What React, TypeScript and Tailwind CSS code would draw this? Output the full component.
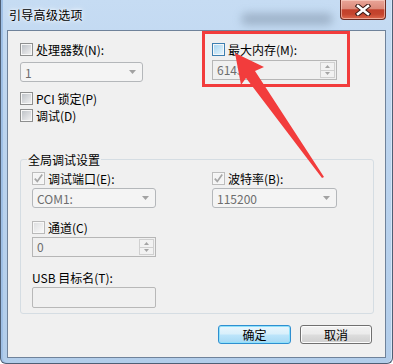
import React from "react";

type BoxKind = "normal" | "hover" | "disabledChecked" | "light";

const boxOuter: Record<BoxKind, string> = {
  normal: "border-[#8e8f8f]",
  hover: "border-[#3c7fb1]",
  disabledChecked: "border-[#bdbdbd]",
  light: "border-[#b9b9b9]",
};

const boxInner: Record<BoxKind, string> = {
  normal: "bg-[linear-gradient(135deg,#bfc3c8,#efeff0)]",
  hover: "bg-[linear-gradient(135deg,#a9d6f2,#e4f4fc)]",
  disabledChecked: "bg-[#f4f4f4]",
  light: "bg-[linear-gradient(135deg,#dfe0e2,#f8f8f8)]",
};

function Box({ kind }: { kind: BoxKind }) {
  return (
    <span
      className={`relative flex h-[13px] w-[13px] shrink-0 items-center justify-center border bg-[#f7f7f7] ${boxOuter[kind]}`}
    >
      <span className={`h-[9px] w-[9px] ${boxInner[kind]}`} />
      {kind === "disabledChecked" && (
        <svg className="absolute inset-0" width="11" height="11" viewBox="0 0 11 11">
          <path d="M1.8 5.6 L4.3 8.4 L9.2 1.6" fill="none" stroke="#a6a6a6" strokeWidth="1.7" />
        </svg>
      )}
    </span>
  );
}

function Check({ label, kind = "normal", className = "" }: { label: string; kind?: BoxKind; className?: string }) {
  return (
    <label className={`flex h-[13px] items-center gap-[3px] text-[12px] leading-[13px] text-black ${className}`}>
      <Box kind={kind} />
      <span className="whitespace-pre">{label}</span>
    </label>
  );
}

function Combo({ value, className = "" }: { value: string; className?: string }) {
  return (
    <div
      className={`flex h-[20px] items-center justify-between rounded-[3px] border border-[#b4b7ba] bg-[#f4f4f4] pl-[4px] pr-[6px] text-[12px] text-[#6d6d6d] ${className}`}
    >
      <span>{value}</span>
      <svg width="7" height="4" viewBox="0 0 7 4">
        <path d="M0 0 H7 L3.5 4 Z" fill="#a2a2a2" />
      </svg>
    </div>
  );
}

function Spin({ value, className = "" }: { value: string; className?: string }) {
  return (
    <div className={`flex h-[20px] border border-[#b6b6b6] bg-[#f0f0f0] text-[12px] text-[#6d6d6d] ${className}`}>
      <span className="flex-1 pl-[4px] leading-[18px]">{value}</span>
      <div className="my-[1px] mr-[1px] flex w-[15px] flex-col border border-[#d0d0d0] bg-[#f2f2f2]">
        <div className="flex flex-1 items-center justify-center border-b border-[#d0d0d0]">
          <svg width="5" height="3" viewBox="0 0 5 3">
            <path d="M0 3 H5 L2.5 0 Z" fill="#a4a4a4" />
          </svg>
        </div>
        <div className="flex flex-1 items-center justify-center">
          <svg width="5" height="3" viewBox="0 0 5 3">
            <path d="M0 0 H5 L2.5 3 Z" fill="#a4a4a4" />
          </svg>
        </div>
      </div>
    </div>
  );
}

export default function App() {
  return (
    <div className="relative flex h-[364px] w-[393px] flex-col overflow-hidden rounded-b-[6px] border-x border-b border-[#4f5f75] bg-[linear-gradient(180deg,#c6dcf3_0%,#bcd4ee_35%,#b2cdea_100%)] font-['Noto_Sans_CJK_SC',sans-serif] shadow-[inset_2px_0_0_#9fc0e6,inset_-1px_0_0_#d6e6f7]">
      {/* blurred window behind the glass */}
      <div className="absolute left-[240px] top-[13px] h-[12px] w-[92px] rounded-full bg-[#8fa3b9] opacity-70 blur-[4px]" />

      {/* title bar */}
      <div className="relative flex h-[30px] shrink-0 items-start justify-between pl-[8px] pr-[6px]">
        <span className="mt-[8px] text-[12px] leading-[14px] tracking-[0.3px] text-black [text-shadow:0_0_6px_#ffffff,0_0_3px_#ffffff]">
          引导高级选项
        </span>
        <div className="flex h-[20px] w-[46px] items-center justify-center rounded-b-[4px] border border-t-0 border-[#6b2b22] bg-[linear-gradient(180deg,#e9a598_0%,#dc8a7a_45%,#c2402b_52%,#c5452e_75%,#de6a4f_100%)] shadow-[inset_0_0_0_1px_rgba(255,220,210,0.55)]">
          <svg width="16" height="12" viewBox="0 0 16 12">
            <path d="M3 2 L13 10 M13 2 L3 10" stroke="#3b1a16" strokeWidth="4.6" strokeLinecap="square" />
            <path d="M3 2 L13 10 M13 2 L3 10" stroke="#ffffff" strokeWidth="2.6" strokeLinecap="square" />
          </svg>
        </div>
      </div>

      {/* client area */}
      <div className="mx-[6px] h-[328px] shrink-0 border border-[#6f829a] bg-[#f0f0f0] text-[12px] leading-[13px] text-black">
        <div className="flex flex-col pl-[12px] pt-[12px]">
          <div className="flex">
            <div className="flex w-[192px] flex-col">
              <Check label="处理器数(N):" />
              <Combo value="1" className="mt-[6px] w-[123px]" />
              <Check label="PCI 锁定(P)" className="mt-[10px]" />
              <Check label="调试(D)" className="mt-[4px]" />
            </div>
            <div className="flex flex-col">
              <Check label="最大内存(M):" kind="hover" />
              <Spin value="6143" className="mt-[4px] w-[125px]" />
            </div>
          </div>

          <div className="relative mt-[37px] h-[155px] w-[354px] rounded-[3px] border border-[#d5dde3] pl-[11px] pt-[12px]">
            <span className="absolute -top-[7px] left-[6px] bg-[#f0f0f0] px-[1px] leading-[13px]">全局调试设置</span>
            <div className="flex">
              <div className="flex w-[180px] flex-col">
                <Check label="调试端口(E):" kind="disabledChecked" />
                <Combo value="COM1:" className="mt-[3px] w-[124px]" />
                <Check label="通道(C)" kind="light" className="mt-[13px]" />
                <Spin value="0" className="mt-[3px] h-[19px] w-[124px]" />
                <span className="mt-[14px] h-[13px] whitespace-pre">USB 目标名(T):</span>
                <div className="mt-[3px] h-[21px] w-[124px] rounded-[2px] border border-[#b8b8b8] bg-[#f0f0f0]" />
              </div>
              <div className="flex flex-col">
                <Check label="波特率(B):" kind="disabledChecked" />
                <Combo value="115200" className="mt-[3px] w-[125px]" />
              </div>
            </div>
          </div>

          <div className="mt-[11px] flex justify-end gap-[9px] pr-[13px]">
            <button className="flex h-[19px] w-[73px] items-center justify-center rounded-[3px] border border-[#2f8fd0] bg-[linear-gradient(180deg,#e9f6fd_0%,#d8effb_48%,#bde5fb_52%,#a6d9f4_100%)] text-[12px] text-black shadow-[inset_0_0_0_1px_#8fe1fb]">
              确定
            </button>
            <button className="flex h-[19px] w-[72px] items-center justify-center rounded-[3px] border border-[#707070] bg-[linear-gradient(180deg,#f2f2f2_0%,#ebebeb_48%,#dddddd_52%,#cfcfcf_100%)] text-[12px] text-black shadow-[inset_0_0_0_1px_#fcfcfc]">
              取消
            </button>
          </div>
        </div>
      </div>

      {/* red annotation */}
      <svg className="pointer-events-none absolute -left-[1px] top-0" width="393" height="364" viewBox="0 0 393 364">
        <rect x="203.5" y="32.5" width="145" height="53" fill="none" stroke="#f23c3c" strokeWidth="3" />
        <polygon points="235,53 264,67 255,71 324,177 322,178 246,78 241,85" fill="#f23c3c" />
      </svg>
    </div>
  );
}
